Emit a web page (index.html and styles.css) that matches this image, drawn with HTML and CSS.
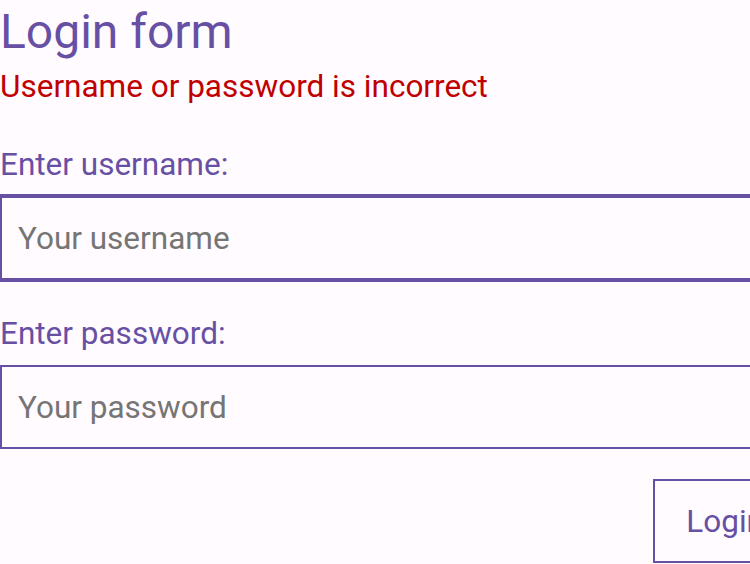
FILE: index.html
```html
<!DOCTYPE html>
<html lang="en">
<head>
<meta charset="utf-8">
<title>Login form</title>
<link rel="stylesheet" href="styles.css">
</head>
<body>
<main class="login">
  <h1 class="title">Login form</h1>
  <p class="error">Username or password is incorrect</p>
  <form class="form">
    <div class="field">
      <label class="label" for="username">Enter username:</label>
      <input class="input input--active" id="username" type="text" placeholder="Your username">
    </div>
    <div class="field">
      <label class="label" for="password">Enter password:</label>
      <input class="input" id="password" type="password" placeholder="Your password">
    </div>
    <div class="actions">
      <button class="button" type="button">Login</button>
    </div>
  </form>
</main>
</body>
</html>
```
FILE: styles.css
```css
html {
  overflow: hidden;
}
body {
  margin: 0;
  background: #fffbfe;
  font-family: Roboto, "Noto Sans", sans-serif;
  color: #6750a4;
}
.login {
  width: 798px;
  display: flex;
  flex-direction: column;
}
.title {
  margin: 0;
  font-size: 48px;
  font-weight: 400;
  line-height: 64px;
  color: #6750a4;
}
.error {
  margin: 0;
  font-size: 31.5px;
  line-height: 46px;
  color: #c00000;
}
.form {
  display: flex;
  flex-direction: column;
  gap: 34px;
  margin-top: 35px;
}
.field {
  display: flex;
  flex-direction: column;
  gap: 11px;
}
.label {
  font-size: 31.5px;
  line-height: 40px;
  color: #6750a4;
}
.input {
  box-sizing: border-box;
  height: 84px;
  width: 100%;
  border: 2px solid #6750a4;
  border-radius: 0;
  background: transparent;
  padding: 0 16px;
  font-family: inherit;
  font-size: 31.5px;
  color: #1c1b1f;
  outline: none;
}
.input::placeholder {
  color: #757575;
}
.input--active {
  outline: 2px solid #6750a4;
  outline-offset: 0;
}
.actions {
  display: flex;
  justify-content: flex-end;
  margin-top: -4px;
}
.button {
  box-sizing: border-box;
  height: 84px;
  padding: 0 32px 0 31px;
  border: 2px solid #6750a4;
  background: transparent;
  color: #6750a4;
  font-family: inherit;
  font-size: 31.5px;
}
```
